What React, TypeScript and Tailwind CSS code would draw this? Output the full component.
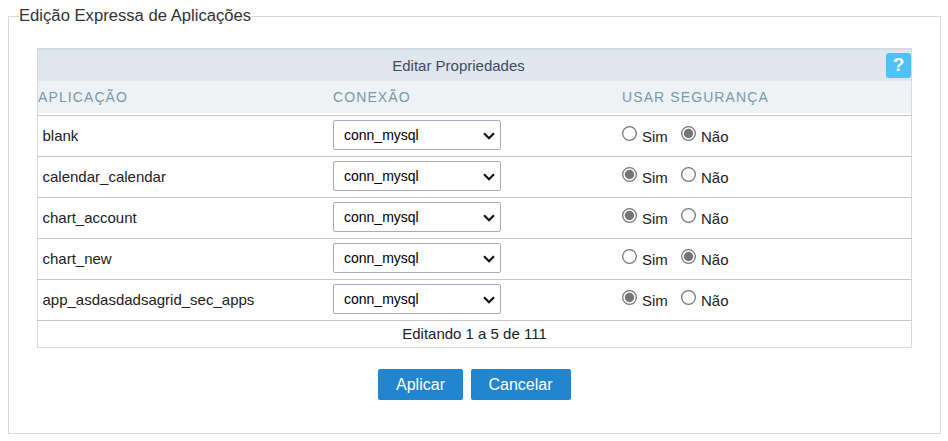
const rows = [
  { name: 'blank', secure: false },
  { name: 'calendar_calendar', secure: true },
  { name: 'chart_account', secure: true },
  { name: 'chart_new', secure: false },
  { name: 'app_asdasdadsagrid_sec_apps', secure: true },
];

function Radio({ checked, label }: { checked: boolean; label: string }) {
  return (
    <label className="flex h-full items-start">
      <svg className="mt-[10px] h-[15px] w-[15px] shrink-0" viewBox="0 0 15 15">
        <circle cx="7.5" cy="7.5" r="6.85" fill="#fff" stroke="#767676" strokeWidth="1.3" />
        {checked && <circle cx="7.5" cy="7.5" r="4.7" fill="#767676" />}
      </svg>
      <span className="ml-[5px] mt-[11px] leading-5">{label}</span>
    </label>
  );
}

function Select({ value }: { value: string }) {
  return (
    <div className="mb-[2px] flex h-[30px] w-[168px] items-center justify-between rounded-[2px] border border-[#a6acba] bg-white pl-[10px] pr-[5px] text-[14px] text-black">
      <span>{value}</span>
      <svg className="mt-[2px] h-[8px] w-[12px]" viewBox="0 0 12 8" fill="none">
        <path d="M1 1.2 6 6.2l5-5" stroke="#101010" strokeWidth="2.2" />
      </svg>
    </div>
  );
}

export default function App() {
  return (
    <div className="h-[441px] w-[948px] bg-white pl-2 pt-[6px] font-['Liberation_Sans',Arial,sans-serif] text-[15px] text-[#222]">
      <fieldset className="h-[428px] w-[933px] border border-[#d0dbe2] px-7">
        <legend className="-ml-[18px] h-5 text-[16.65px] leading-5 text-[#333]">Edição Expressa de Aplicações</legend>
        <div className="mt-[22px] w-[875px] border border-t-2 border-[#d0dbe2]">
          <div className="flex h-[31px] bg-[#dfe6ee] text-[#3f4a5e]">
            <span className="flex-1 pr-[7px] text-center leading-8">Editar Propriedades</span>
            <button className="mt-[3px] h-[25px] w-[25px] rounded-[3px] bg-[#4fc1f9] pb-[2px] text-[19px] font-bold leading-[23px] text-white">?</button>
          </div>
          <div className="mb-[2px] grid h-8 grid-cols-[295px_289px_1fr] bg-[#eef2f5] text-[14px] leading-8 tracking-[1.1px] text-[#7799aa]">
            <span>APLICAÇÃO</span>
            <span>CONEXÃO</span>
            <span>USAR SEGURANÇA</span>
          </div>
          {rows.map((row) => (
            <div key={row.name} className="-mx-px grid h-[41px] grid-cols-[296px_289px_1fr] items-center border-t border-[#c8c8c8]">
              <span className="pl-[5.5px]">{row.name}</span>
              <Select value="conn_mysql" />
              <div className="flex h-full">
                <div className="w-[59px]"><Radio checked={row.secure} label="Sim" /></div>
                <Radio checked={!row.secure} label="Não" />
              </div>
            </div>
          ))}
          <div className="-mx-px h-[27px] border-t border-[#c8c8c8] text-center leading-[26px]">Editando 1 a 5 de 111</div>
        </div>
        <div className="mt-[21px] flex justify-center gap-2 text-[16px] text-white">
          <button className="h-[31px] w-[85px] rounded-[2px] bg-[#2185d0]">Aplicar</button>
          <button className="h-[31px] w-[100px] rounded-[2px] bg-[#2185d0] pr-px">Cancelar</button>
        </div>
      </fieldset>
    </div>
  );
}
